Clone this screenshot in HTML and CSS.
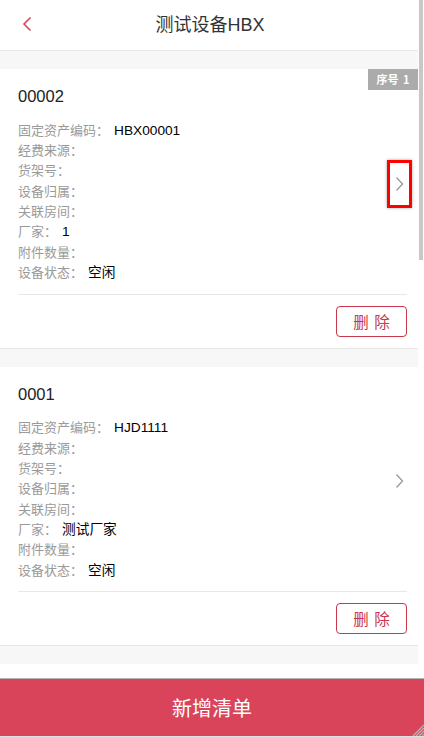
FILE: index.html
```html
<!DOCTYPE html>
<html lang="zh">
<head>
<meta charset="utf-8">
<title>测试设备HBX</title>
<link rel="stylesheet" href="styles.css">
</head>
<body>
<div class="app">
  <div class="scroller">
    <div class="main">
      <header class="topbar">
        <svg class="back" width="10" height="16" viewBox="0 0 10 16"><path d="M8.5 1.5 L2 8 L8.5 14.5" fill="none" stroke="#d9435a" stroke-width="1.6"/></svg>
        <h1 class="title">测试设备HBX</h1>
      </header>
      <div class="gap"></div>
      <section class="card">
        <span class="badge">序号 1</span>
        <div class="card-body">
          <div class="info">
            <div class="code">00002</div>
            <div class="rows">
              <div class="row"><span class="lbl">固定资产编码：</span><span class="val">HBX00001</span></div>
              <div class="row"><span class="lbl">经费来源：</span></div>
              <div class="row"><span class="lbl">货架号：</span></div>
              <div class="row"><span class="lbl">设备归属：</span></div>
              <div class="row"><span class="lbl">关联房间：</span></div>
              <div class="row"><span class="lbl">厂家：</span><span class="val">1</span></div>
              <div class="row"><span class="lbl">附件数量：</span></div>
              <div class="row"><span class="lbl">设备状态：</span><span class="val">空闲</span></div>
            </div>
          </div>
          <div class="arrow-wrap">
            <svg class="arrow" width="9" height="16" viewBox="0 0 9 16"><path d="M1.5 1.5 L7.5 8 L1.5 14.5" fill="none" stroke="#999" stroke-width="1.3"/></svg>
            <span class="highlight"></span>
          </div>
        </div>
        <div class="card-foot"><button class="del">删 除</button></div>
      </section>
      <div class="gap"></div>
      <section class="card">
        <div class="card-body">
          <div class="info">
            <div class="code">0001</div>
            <div class="rows">
              <div class="row"><span class="lbl">固定资产编码：</span><span class="val">HJD1111</span></div>
              <div class="row"><span class="lbl">经费来源：</span></div>
              <div class="row"><span class="lbl">货架号：</span></div>
              <div class="row"><span class="lbl">设备归属：</span></div>
              <div class="row"><span class="lbl">关联房间：</span></div>
              <div class="row"><span class="lbl">厂家：</span><span class="val">测试厂家</span></div>
              <div class="row"><span class="lbl">附件数量：</span></div>
              <div class="row"><span class="lbl">设备状态：</span><span class="val">空闲</span></div>
            </div>
          </div>
          <div class="arrow-wrap">
            <svg class="arrow" width="9" height="16" viewBox="0 0 9 16"><path d="M1.5 1.5 L7.5 8 L1.5 14.5" fill="none" stroke="#999" stroke-width="1.3"/></svg>
          </div>
        </div>
        <div class="card-foot"><button class="del">删 除</button></div>
      </section>
      <div class="gap"></div>
      <section class="card"></section>
    </div>
    <div class="track"><div class="thumb"></div></div>
  </div>
  <footer class="footer">
    <span class="add">新增清单</span>
    <svg class="grip" width="12" height="12" viewBox="0 0 12 12"><path d="M12 1 L1 12 M12 4 L4 12 M12 7 L7 12 M12 10 L10 12" stroke="#b8b8b8" stroke-width="1.2"/></svg>
  </footer>
</div>
</body>
</html>
```

FILE: styles.css
```css
* { box-sizing: border-box; }
html, body { margin: 0; padding: 0; }
body {
  width: 424px;
  height: 737px;
  overflow: hidden;
  background: #fff;
  font-family: "Noto Sans CJK SC", "Liberation Sans", sans-serif;
  color: #333;
}
.app { display: flex; flex-direction: column; height: 737px; }
.scroller { display: flex; height: 678px; overflow: hidden; }
.main { width: 418px; background: #f7f7f7; display: flex; flex-direction: column; overflow: hidden; }
.track { width: 6px; background: #fff; padding-left: 1px; }
.thumb { width: 4px; height: 260px; background: #c8c8c8; }

.topbar {
  height: 51px;
  flex: none;
  background: #fff;
  border-bottom: 1px solid #e8e8e8;
  display: flex;
  align-items: center;
  justify-content: center;
  position: relative;
}
.back { position: absolute; left: 22px; top: 16px; }
.title {
  margin: 0 0 0 2px;
  font-size: 18px;
  font-weight: normal;
  color: #333;
  line-height: 24px;
  font-family: "Liberation Sans", "Noto Sans CJK SC", sans-serif;
}

.gap { height: 18px; flex: none; }
.card {
  flex: none;
  background: #fff;
  border-bottom: 1px solid #e8e8e8;
  position: relative;
  padding: 0 11px 0 18px;
}
.card:last-child { height: 30px; border: none; }
.badge {
  position: absolute;
  right: 0;
  top: 0;
  width: 50px;
  height: 21px;
  background: #ababab;
  color: #fff;
  font-size: 11px;
  font-weight: bold;
  line-height: 21px;
  text-align: center;
  word-spacing: 2px;
}
.card-body {
  display: flex;
  border-bottom: 1px solid #e8e8e8;
  padding: 16px 0 11px;
}
.info { flex: 1; }
.code { font-size: 16.5px; line-height: 22px; color: #222; font-family: "Liberation Sans", "Noto Sans CJK SC", sans-serif; }
.rows { margin-top: 12.5px; }
.row { font-size: 13px; line-height: 20.4px; height: 20.4px; white-space: nowrap; }
.lbl { color: #9a9a9a; }
.val { color: #000; margin-left: 5px; font-family: "Liberation Sans", "Noto Sans CJK SC", sans-serif; font-size: 13.7px; }
.arrow-wrap {
  width: 24px;
  display: flex;
  align-items: center;
  justify-content: center;
  position: relative;
  margin-right: -4px;
}
.highlight {
  position: absolute;
  left: 0;
  top: 50%;
  width: 25px;
  height: 48px;
  margin-top: -24px;
  border: 3px solid #ff0000;
  box-shadow: 0 0 3px rgba(0,0,0,0.35);
}
.card-foot { display: flex; justify-content: flex-end; padding: 11px 0 11px; }
.del {
  width: 71px;
  height: 31px;
  background: #fff;
  border: 1px solid #c8374a;
  border-radius: 4px;
  color: #c8374a;
  font-size: 15.5px;
  font-family: "Noto Sans CJK SC", sans-serif;
  line-height: 29px;
  padding: 0;
  word-spacing: 2px;
}

.footer {
  height: 59px;
  flex: none;
  background: #d9445a;
  border-top: 1px solid #b5b5b5;
  border-bottom: 1px solid #e0e0e0;
  display: flex;
  align-items: center;
  justify-content: center;
  position: relative;
}
.add { color: #fff; font-size: 20px; line-height: 28px; }
.grip { position: absolute; right: 0; bottom: 0; }
```
